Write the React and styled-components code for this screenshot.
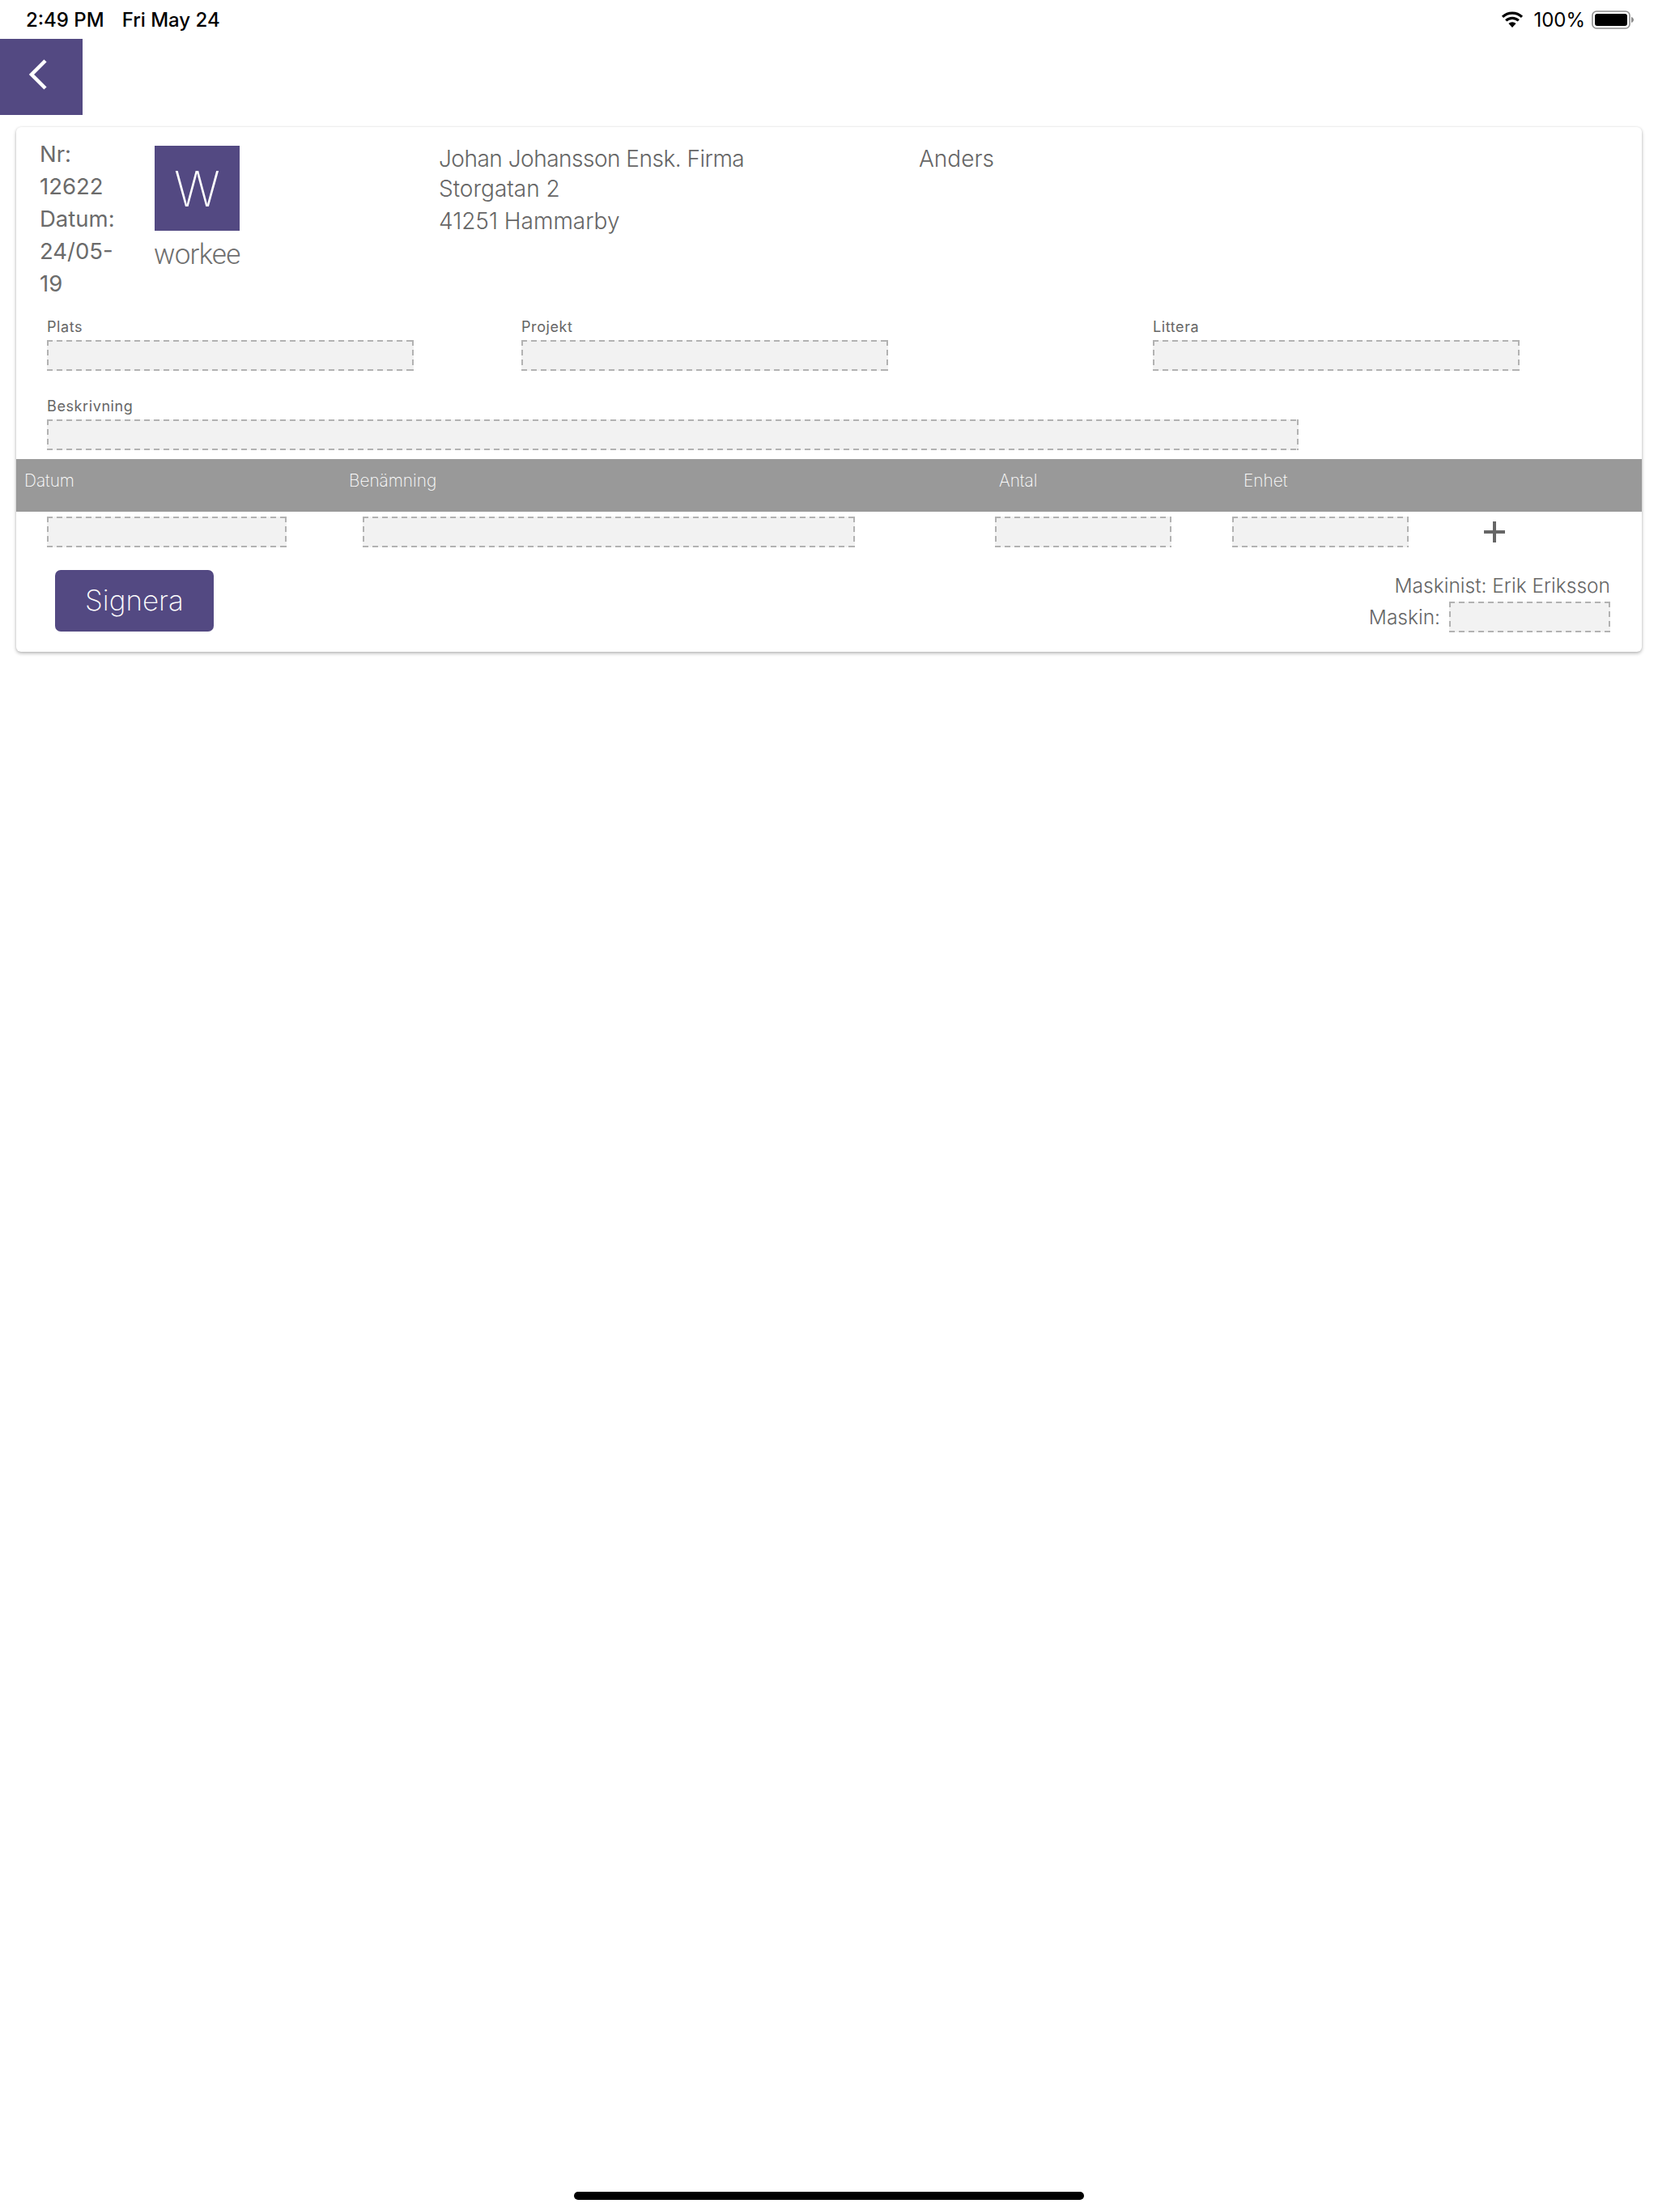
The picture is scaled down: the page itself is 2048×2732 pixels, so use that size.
import React from 'react'
import styled, { createGlobalStyle } from 'styled-components'

const GlobalStyle = createGlobalStyle`
    html, body {
        margin: 0;
        padding: 0;
        background: #fff;
    }
    * {
        box-sizing: border-box;
    }
`

const Page = styled.div`
    width: 2048px;
    height: 2732px;
    display: flex;
    flex-direction: column;
    font-family: Inter, "Liberation Sans", sans-serif;
    color: #666;
    overflow: hidden;
`

const StatusBar = styled.div`
    height: 48px;
    padding: 0 30px 0 32px;
    display: flex;
    align-items: center;
    justify-content: space-between;
    color: #000;
    font-size: 24px;
`

const StatusLeft = styled.div`
    display: flex;
    gap: 22px;
    font-weight: 500;
`

const StatusRight = styled.div`
    display: flex;
    align-items: center;
    gap: 8px;

    svg:first-child {
        margin-right: 4px;
    }
`

const BackButton = styled.button`
    width: 102px;
    height: 94px;
    padding: 0 0 0 34px;
    border: 0;
    background: #534982;
    display: flex;
    align-items: flex-start;
`

const Card = styled.div`
    margin: 15px 20px 0;
    height: 648px;
    background: #fff;
    border-radius: 6px;
    box-shadow: 0 2px 4px rgba(0, 0, 0, 0.28), 0 0 3px rgba(0, 0, 0, 0.08);
    display: flex;
    flex-direction: column;
`

const Head = styled.div`
    height: 236px;
    padding: 13px 0 0 29px;
    display: flex;
    align-items: flex-start;
`

const NrColumn = styled.div`
    width: 142px;
    font-size: 27.5px;
    line-height: 40px;
    font-weight: 400;
    color: #6b6b6b;
`

const LogoColumn = styled.div`
    width: 105px;
    margin-top: 10px;
`

const LogoMark = styled.div`
    height: 105px;
    background: #534982;
    color: #fff;
    display: flex;
    align-items: center;
    justify-content: center;
    font-size: 60px;
    font-weight: 150;
`

const LogoText = styled.div`
    margin-top: 8px;
    margin-left: -1px;
    font-family: Roboto, Inter, sans-serif;
    font-size: 35px;
    line-height: 44px;
    font-weight: 300;
    color: #6f6f6f;
    white-space: nowrap;
    letter-spacing: -0.7px;
`

const AddressColumn = styled.div`
    margin-left: 246px;
    width: 593px;
    padding-top: 8px;
    font-size: 28px;
    line-height: 37px;
    font-weight: 300;
`

const AddressLine = styled.div`
    margin-top: ${p => p.$top || 0}px;
    letter-spacing: ${p => (p.$tight ? '-0.5px' : '0')};
`

const SideName = styled.div`
    padding-top: 8px;
    font-size: 28px;
    line-height: 37px;
    font-weight: 300;
`

const FieldRow = styled.div`
    display: flex;
    padding-left: 38px;
    margin-top: ${p => p.$top || 0}px;
`

const FieldBlock = styled.div`
    width: ${p => p.$w}px;
    margin-left: ${p => p.$ml || 0}px;
`

const FieldLabel = styled.div`
    font-size: 18px;
    line-height: 22px;
    font-weight: 400;
    letter-spacing: 0.6px;
    margin-bottom: 5px;
`

// dashes are longer than what "border: dashed" draws, so they are painted as backgrounds
const Input = styled.div`
    width: ${p => (p.$w ? p.$w + 'px' : '100%')};
    height: 38px;
    margin-left: ${p => p.$ml || 0}px;
    flex: none;
    background:
        linear-gradient(90deg, #b2b2b2 7px, transparent 7px) top left / 12px 2px repeat-x,
        linear-gradient(90deg, #b2b2b2 7px, transparent 7px) bottom left / 12px 2px repeat-x,
        linear-gradient(180deg, #b2b2b2 7px, transparent 7px) top left / 2px 12px repeat-y,
        linear-gradient(180deg, #b2b2b2 7px, transparent 7px) top right / 2px 12px repeat-y,
        #f2f2f2;
`

const TableHead = styled.div`
    margin-top: 11px;
    height: 65px;
    background: #999;
    color: #fff;
    display: grid;
    grid-template-columns: 401px 803px 302px 1fr;
    padding: 14px 0 0 10px;
    font-size: 20.8px;
    line-height: 26px;
    font-weight: 250;
`

const TableRow = styled.div`
    display: flex;
    align-items: center;
    padding: 6px 0 0 38px;
`

const PlusButton = styled.div`
    margin-left: 92px;
    width: 28px;
    height: 28px;
    display: flex;
`

const Foot = styled.div`
    display: flex;
    justify-content: space-between;
    padding: 28px 39px 0 48px;
`

const SignButton = styled.button`
    width: 196px;
    height: 76px;
    border: 0;
    border-radius: 7px;
    background: #534982;
    color: #fff;
    font-family: inherit;
    font-size: 35px;
    font-weight: 250;
    padding-bottom: 3px;
`

const MachineColumn = styled.div`
    display: flex;
    flex-direction: column;
    align-items: flex-end;
    font-size: 24.5px;
    font-weight: 300;
    padding-top: 4px;
`

const MachineLine = styled.div`
    display: flex;
    align-items: center;
    gap: 11px;
    height: 38px;
    margin-top: ${p => p.$top || 0}px;
`

const HomeBar = styled.div`
    margin: auto auto 15px;
    width: 630px;
    height: 10px;
    border-radius: 5px;
    background: #000;
`

function WifiIcon() {
    return (
        <svg width="28" height="20" viewBox="0 0 28 20">
            <path d="M14 20 L9.4 15 A6.7 6.7 0 0 1 18.6 15 Z" fill="#000" />
            <path d="M6.2 11.4 A11.4 11.4 0 0 1 21.8 11.4" fill="none" stroke="#000" strokeWidth="3.2" />
            <path d="M2 6.8 A17.6 17.6 0 0 1 26 6.8" fill="none" stroke="#000" strokeWidth="3.2" />
        </svg>
    )
}

function BatteryIcon() {
    return (
        <svg width="52" height="23" viewBox="0 0 52 23">
            <rect x="1" y="1" width="46" height="21" rx="5" fill="none" stroke="#8e8e8e" strokeWidth="1.6" />
            <rect x="4" y="4" width="40" height="15" rx="3" fill="#000" />
            <path d="M49 8 C51 8.6 52 10 52 11.5 C52 13 51 14.4 49 15 Z" fill="#8e8e8e" />
        </svg>
    )
}

function App() {
    return (
        <Page>
            <GlobalStyle />
            <StatusBar>
                <StatusLeft>
                    <span>2:49 PM</span>
                    <span>Fri May 24</span>
                </StatusLeft>
                <StatusRight>
                    <WifiIcon />
                    <span>100%</span>
                    <BatteryIcon />
                </StatusRight>
            </StatusBar>

            <BackButton>
                <svg width="26" height="40" viewBox="0 0 26 40" style={{ marginTop: 24 }}>
                    <path d="M22 3 L5 20 L22 37" fill="none" stroke="#fff" strokeWidth="4.5" />
                </svg>
            </BackButton>

            <Card>
                <Head>
                    <NrColumn>
                        Nr:<br />12622<br />Datum:<br />24/05-<br />19
                    </NrColumn>
                    <LogoColumn>
                        <LogoMark>W</LogoMark>
                        <LogoText>workee</LogoText>
                    </LogoColumn>
                    <AddressColumn>
                        <AddressLine $tight>Johan Johansson Ensk. Firma</AddressLine>
                        <AddressLine>Storgatan 2</AddressLine>
                        <AddressLine $top={3}>41251 Hammarby</AddressLine>
                    </AddressColumn>
                    <SideName>Anders</SideName>
                </Head>

                <FieldRow>
                    <FieldBlock $w={453}>
                        <FieldLabel>Plats</FieldLabel>
                        <Input />
                    </FieldBlock>
                    <FieldBlock $w={453} $ml={133}>
                        <FieldLabel>Projekt</FieldLabel>
                        <Input />
                    </FieldBlock>
                    <FieldBlock $w={453} $ml={327}>
                        <FieldLabel>Littera</FieldLabel>
                        <Input />
                    </FieldBlock>
                </FieldRow>

                <FieldRow $top={33}>
                    <FieldBlock $w={1546}>
                        <FieldLabel>Beskrivning</FieldLabel>
                        <Input />
                    </FieldBlock>
                </FieldRow>

                <TableHead>
                    <span>Datum</span>
                    <span>Benämning</span>
                    <span>Antal</span>
                    <span>Enhet</span>
                </TableHead>

                <TableRow>
                    <Input $w={296} />
                    <Input $w={608} $ml={94} />
                    <Input $w={218} $ml={173} />
                    <Input $w={218} $ml={75} />
                    <PlusButton>
                        <svg width="28" height="28" viewBox="0 0 28 28">
                            <path d="M14 1 V27 M1 14 H27" stroke="#666" strokeWidth="4" fill="none" />
                        </svg>
                    </PlusButton>
                </TableRow>

                <Foot>
                    <SignButton>Signera</SignButton>
                    <MachineColumn>
                        <div>Maskinist: Erik Eriksson</div>
                        <MachineLine $top={5}>
                            <span>Maskin:</span>
                            <Input $w={199} />
                        </MachineLine>
                    </MachineColumn>
                </Foot>
            </Card>

            <HomeBar />
        </Page>
    )
}

export default App
